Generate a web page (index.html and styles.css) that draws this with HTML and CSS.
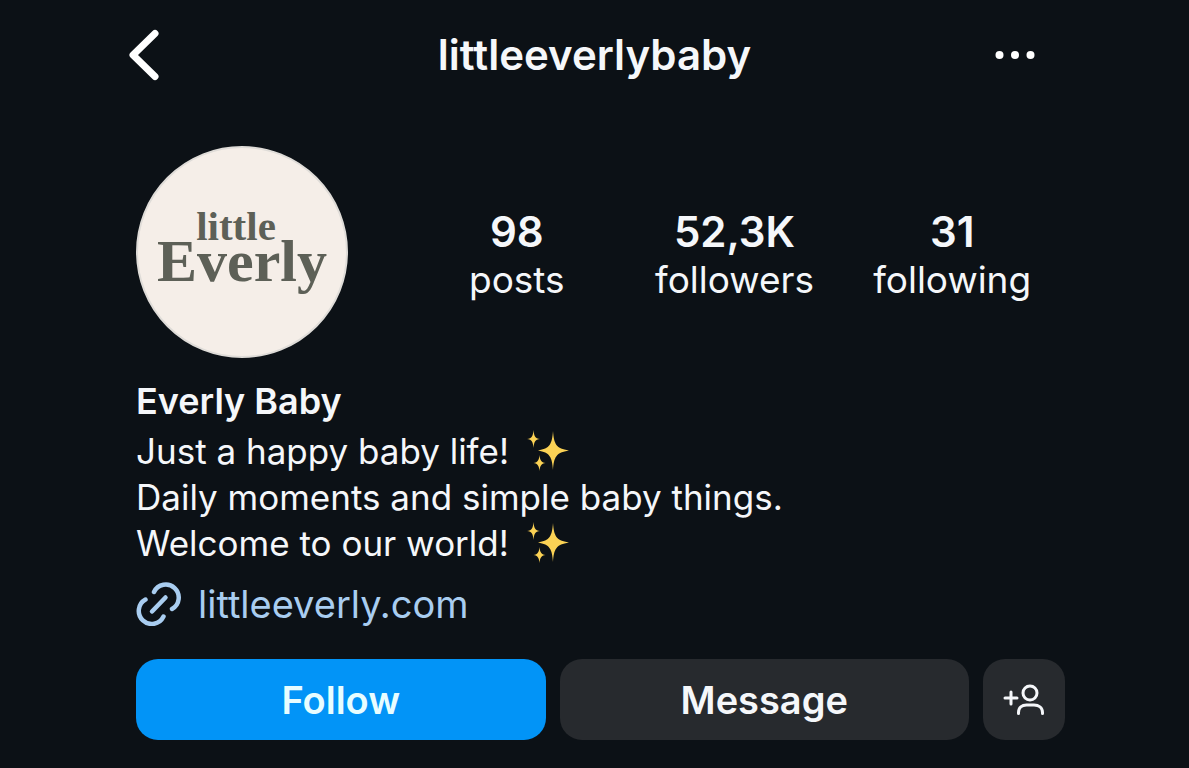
FILE: index.html
```html
<!DOCTYPE html>
<html lang="en">
  <head>
    <meta charset="UTF-8" />
    <meta name="viewport" content="width=device-width, initial-scale=1.0" />
    <title>littleeverlybaby</title>
    <link rel="stylesheet" href="styles.css">
  </head>
  <body>
    <svg class="defs" width="0" height="0" aria-hidden="true">
      <symbol id="sparkles" viewBox="0 0 42 42">
        <path d="M26 1C27 14 29 18.500 42 20.500C29 22.500 27 27 26 40C25 27 23 22.500 11 20.500C23 18.500 25 14 26 1Z" />
        <path d="M6.500 0C7 6 8 8.300 13 9C8 9.700 7 12 6.500 18C6 12 5 9.700 0 9C5 8.300 6 6 6.500 0Z" />
        <path d="M12.500 25C13 30 14 32.300 18.500 33C14 33.700 13 36 12.500 41C12 36 11 33.700 6.500 33C11 32.300 12 30 12.500 25Z" />
      </symbol>
    </svg>
    <header class="topbar">
      <button class="icon-btn" type="button" aria-label="Back">
        <svg width="32" height="52" viewBox="0 0 32 52">
          <path d="M27 4.500L5 26L27 47.500" fill="none" stroke="currentColor" stroke-width="7" stroke-linecap="round" stroke-linejoin="round" />
        </svg>
      </button>
      <h1 class="username">littleeverlybaby</h1>
      <button class="icon-btn more" type="button" aria-label="More">
        <svg width="40" height="10" viewBox="0 0 40 10">
          <g fill="currentColor">
            <circle cx="4.500" cy="5" r="4" />
            <circle cx="20" cy="5" r="4" />
            <circle cx="35.500" cy="5" r="4" />
          </g>
        </svg>
      </button>
    </header>
    <main class="profile">
      <section class="summary">
        <div class="avatar">
          <span class="logo-small">little</span>
          <span class="logo-big">Everly</span>
        </div>
        <ul class="stats">
          <li><strong>98</strong><span>posts</span></li>
          <li><strong>52,3K</strong><span>followers</span></li>
          <li><strong>31</strong><span>following</span></li>
        </ul>
      </section>
      <section class="bio">
        <h2>Everly Baby</h2>
        <p>Just a happy baby life! <svg class="sparkles"><use href="#sparkles" /></svg></p>
        <p>Daily moments and simple baby things.</p>
        <p>Welcome to our world! <svg class="sparkles"><use href="#sparkles" /></svg></p>
      </section>
      <a class="site" href="#">
        <svg width="46" height="44" viewBox="0 0 46 44">
          <g fill="none" stroke="currentColor" stroke-width="4.500" stroke-linecap="round">
            <path d="M18 10A13 13 0 1 1 36 27" />
            <path d="M27.500 34.500A13 13 0 1 1 9.500 17.500" />
            <path d="M16 29.500L29.500 15.500" />
          </g>
        </svg>
        <span>littleeverly.com</span>
      </a>
      <div class="actions">
        <button class="btn follow" type="button">Follow</button>
        <button class="btn" type="button">Message</button>
        <button class="btn add" type="button" aria-label="Similar accounts">
          <svg width="44" height="34" viewBox="0 0 44 34">
            <g fill="none" stroke="currentColor" stroke-width="3" stroke-linecap="round">
              <path d="M3 15H15M9 9V21" />
              <circle cx="28" cy="10" r="7" />
              <path d="M16.500 30.500V29.500C16.500 24.500 20 22 24.500 22H32C36.500 22 40.500 24.500 40.500 29.500V30.500" />
            </g>
          </svg>
        </button>
      </div>
    </main>
  </body>
</html>
```
FILE: styles.css
```css
* {
  box-sizing: border-box;
}

body {
  margin: 0;
  background: #0c1116;
  color: #f5f7fa;
  font-family: Inter, "Liberation Sans", sans-serif;
}

h1,
h2,
p,
ul {
  margin: 0;
  padding: 0;
}

button {
  border: 0;
  padding: 0;
  font-family: inherit;
  color: inherit;
  cursor: pointer;
}

svg {
  display: block;
}

.defs {
  position: absolute;
}

.topbar {
  display: grid;
  grid-template-columns: 66px 1fr 66px;
  align-items: center;
  height: 110px;
  padding: 0 128px;
}

.icon-btn {
  background: none;
  justify-self: start;
  color: #fff;
}

.username {
  text-align: center;
  font-size: 42px;
  line-height: 52px;
  font-weight: 600;
}

.profile {
  padding: 36px 124px 28px 136px;
}

.summary {
  display: flex;
  align-items: center;
  gap: 60px;
}

.avatar {
  display: flex;
  flex-direction: column;
  align-items: center;
  flex: none;
  width: 212px;
  height: 212px;
  padding-top: 58px;
  border: 2px solid #dfdcd8;
  border-radius: 50%;
  background: #f5eee8;
  color: #5d6057;
  font-family: "Liberation Serif", serif;
  font-weight: 700;
}

.logo-small {
  margin-right: 12px;
  font-size: 41px;
  line-height: 40px;
}

.logo-big {
  font-size: 60px;
  line-height: 30px;
}

.stats {
  flex: 1;
  display: grid;
  grid-template-columns: repeat(3, 1fr);
  list-style: none;
  padding: 8px 4px 0 0;
}

.stats li {
  display: flex;
  flex-direction: column;
  align-items: center;
  line-height: 48px;
}

.stats strong {
  font-size: 42px;
  font-weight: 600;
}

.stats span {
  font-size: 37px;
}

.bio {
  padding-top: 20px;
  font-size: 35px;
  line-height: 46px;
}

.bio h2 {
  margin-bottom: 4px;
  font-size: 36px;
  font-weight: 600;
}

.bio p {
  display: flex;
  align-items: center;
  gap: 18px;
}

.sparkles {
  width: 42px;
  height: 42px;
  fill: #fbd255;
}

.site {
  display: inline-flex;
  align-items: center;
  gap: 16px;
  margin-top: 15px;
  font-size: 38px;
  line-height: 46px;
  color: #a9cdf0;
  text-decoration: none;
}

.actions {
  display: flex;
  gap: 14px;
  margin-top: 29px;
}

.btn {
  display: flex;
  flex: 1;
  align-items: center;
  justify-content: center;
  height: 81px;
  border-radius: 22px;
  background: #272a2e;
  font-size: 38px;
  font-weight: 600;
}

.follow {
  background: #0294f7;
  color: #e8fdff;
}

.add {
  flex: 0 0 82px;
}
```
